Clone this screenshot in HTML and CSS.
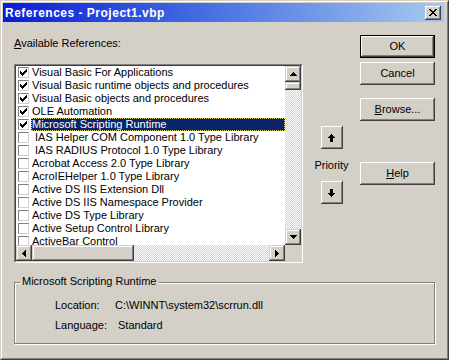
FILE: index.html
```html
<!DOCTYPE html>
<html>
<head>
<meta charset="utf-8">
<title>References - Project1.vbp</title>
<link rel="stylesheet" href="styles.css">
</head>
<body>
<div class="window">
  <div class="frame">
    <div class="titlebar">
      <span class="title">References - Project1.vbp</span>
      <span class="close"><svg width="8" height="7" viewBox="0 0 8 7" shape-rendering="crispEdges"><path d="M0 0h2v1h-2z M6 0h2v1h-2z M1 1h2v1h-2z M5 1h2v1h-2z M2 2h4v1h-4z M3 3h2v1h-2z M2 4h4v1h-4z M1 5h2v1h-2z M5 5h2v1h-2z M0 6h2v1h-2z M6 6h2v1h-2z" fill="#000"/></svg></span>
    </div>
    <div class="body">
      <div class="main">
        <div class="left">
          <div class="label"><u>A</u>vailable References:</div>
          <div class="list">
            <div class="list-in">
              <div class="items">
                <div class="row"><span class="cb"><svg class="chk" width="7" height="7" viewBox="0 0 7 7" shape-rendering="crispEdges"><path d="M6 0h1v1h-1z M5 1h2v1h-2z M0 2h1v1h-1z M4 2h3v1h-3z M0 3h2v1h-2z M3 3h3v1h-3z M0 4h5v1h-5z M1 5h3v1h-3z M2 6h1v1h-1z"/></svg></span><span class="txt">Visual Basic For Applications</span></div>
                <div class="row"><span class="cb"><svg class="chk" width="7" height="7" viewBox="0 0 7 7" shape-rendering="crispEdges"><path d="M6 0h1v1h-1z M5 1h2v1h-2z M0 2h1v1h-1z M4 2h3v1h-3z M0 3h2v1h-2z M3 3h3v1h-3z M0 4h5v1h-5z M1 5h3v1h-3z M2 6h1v1h-1z"/></svg></span><span class="txt">Visual Basic runtime objects and procedures</span></div>
                <div class="row"><span class="cb"><svg class="chk" width="7" height="7" viewBox="0 0 7 7" shape-rendering="crispEdges"><path d="M6 0h1v1h-1z M5 1h2v1h-2z M0 2h1v1h-1z M4 2h3v1h-3z M0 3h2v1h-2z M3 3h3v1h-3z M0 4h5v1h-5z M1 5h3v1h-3z M2 6h1v1h-1z"/></svg></span><span class="txt">Visual Basic objects and procedures</span></div>
                <div class="row"><span class="cb"><svg class="chk" width="7" height="7" viewBox="0 0 7 7" shape-rendering="crispEdges"><path d="M6 0h1v1h-1z M5 1h2v1h-2z M0 2h1v1h-1z M4 2h3v1h-3z M0 3h2v1h-2z M3 3h3v1h-3z M0 4h5v1h-5z M1 5h3v1h-3z M2 6h1v1h-1z"/></svg></span><span class="txt">OLE Automation</span></div>
                <div class="row sel"><span class="cb"><svg class="chk" width="7" height="7" viewBox="0 0 7 7" shape-rendering="crispEdges"><path d="M6 0h1v1h-1z M5 1h2v1h-2z M0 2h1v1h-1z M4 2h3v1h-3z M0 3h2v1h-2z M3 3h3v1h-3z M0 4h5v1h-5z M1 5h3v1h-3z M2 6h1v1h-1z"/></svg></span><span class="txt">Microsoft Scripting Runtime</span></div>
                <div class="row"><span class="cb"></span><span class="txt indent">IAS Helper COM Component 1.0 Type Library</span></div>
                <div class="row"><span class="cb"></span><span class="txt indent">IAS RADIUS Protocol 1.0 Type Library</span></div>
                <div class="row"><span class="cb"></span><span class="txt">Acrobat Access 2.0 Type Library</span></div>
                <div class="row"><span class="cb"></span><span class="txt">AcroIEHelper 1.0 Type Library</span></div>
                <div class="row"><span class="cb"></span><span class="txt">Active DS IIS Extension Dll</span></div>
                <div class="row"><span class="cb"></span><span class="txt">Active DS IIS Namespace Provider</span></div>
                <div class="row"><span class="cb"></span><span class="txt">Active DS Type Library</span></div>
                <div class="row"><span class="cb"></span><span class="txt">Active Setup Control Library</span></div>
                <div class="row"><span class="cb"></span><span class="txt">ActiveBar Control</span></div>
              </div>
              <div class="vscroll">
                <span class="sbtn"><svg width="7" height="4" viewBox="0 0 7 4" shape-rendering="crispEdges"><path d="M3 0h1v1h1v1h1v1h1v1h-7v-1h1v-1h1v-1h1z"/></svg></span>
                <span class="sthumb vthumb"></span>
                <span class="track"></span>
                <span class="sbtn"><svg width="7" height="4" viewBox="0 0 7 4" shape-rendering="crispEdges"><path d="M0 0h7v1h-1v1h-1v1h-1v1h-1v-1h-1v-1h-1v-1h-1z"/></svg></span>
              </div>
              <div class="hscroll">
                <span class="sbtn"><svg width="4" height="7" viewBox="0 0 4 7" shape-rendering="crispEdges"><path d="M3 0h1v7h-1v-1h-1v-1h-1v-1h-1v-1h1v-1h1v-1h1z"/></svg></span>
                <span class="sthumb hthumb"></span>
                <span class="track"></span>
                <span class="sbtn"><svg width="4" height="7" viewBox="0 0 4 7" shape-rendering="crispEdges"><path d="M0 0h1v1h1v1h1v1h1v1h-1v1h-1v1h-1v1h-1z"/></svg></span>
              </div>
              <div class="corner"></div>
            </div>
          </div>
        </div>
        <div class="priority">
          <span class="pbtn"><svg width="7" height="8" viewBox="0 0 7 8" shape-rendering="crispEdges"><path d="M3 0h1v1h1v1h1v1h1v1h-2v4h-3v-4h-2v-1h1v-1h1v-1h1z"/></svg></span>
          <span class="plabel">Priority</span>
          <span class="pbtn pdown"><svg width="7" height="8" viewBox="0 0 7 8" shape-rendering="crispEdges"><path d="M2 0h3v4h2v1h-1v1h-1v1h-1v1h-1v-1h-1v-1h-1v-1h-1v-1h2z"/></svg></span>
        </div>
        <div class="buttons">
          <span class="btn default">OK</span>
          <span class="btn b-cancel">Cancel</span>
          <span class="btn b-browse"><u>B</u>rowse...</span>
          <span class="btn b-help"><u>H</u>elp</span>
        </div>
      </div>
      <div class="group">
        <span class="legend">Microsoft Scripting Runtime</span>
        <div class="info-row"><span class="k">Location:</span><span class="v">C:\WINNT\system32\scrrun.dll</span></div>
        <div class="info-row"><span class="k lang">Language:</span><span class="v">Standard</span></div>
      </div>
    </div>
  </div>
</div>
</body>
</html>
```
FILE: styles.css
```css
* { box-sizing: border-box; }
html, body { margin: 0; padding: 0; }
body {
  width: 449px;
  height: 360px;
  overflow: hidden;
  background: #D4D0C8;
  font-family: "Liberation Sans", Arial, sans-serif;
  font-size: 11px;
  color: #000;
}
u { text-decoration: underline; text-underline-offset: 1px; }

.window {
  width: 449px;
  height: 360px;
  background: #D4D0C8;
  border: 1px solid;
  border-color: #D4D0C8 #404040 #404040 #D4D0C8;
}
.frame {
  height: 100%;
  border: 1px solid;
  border-color: #FFFFFF #808080 #808080 #FFFFFF;
  padding: 1px 3px 3px 1px;
  display: flex;
  flex-direction: column;
}

.titlebar {
  height: 19px;
  flex: none;
  background: linear-gradient(to right, #0A1CD8 0%, #3C64E0 40%, #A6CAF0 100%);
  display: flex;
  align-items: center;
  justify-content: space-between;
  padding-left: 2px;
}
.title {
  color: #fff;
  font-weight: bold;
  font-size: 12px;
  letter-spacing: 0.5px;
  line-height: 14px;
}
.close {
  width: 16px;
  height: 14px;
  margin-right: 3px;
  background: #D4D0C8;
  box-shadow: inset -1px -1px #404040, inset 1px 1px #FFFFFF, inset -2px -2px #808080, inset 2px 2px #D4D0C8;
  display: flex;
  align-items: center;
  justify-content: center;
  padding-right: 1px;
}

.body {
  flex: 1;
  display: flex;
  flex-direction: column;
  padding-left: 11px;
}
.main {
  display: flex;
  align-items: flex-start;
}
.left {
  width: 289px;
  padding-top: 15px;
}
.label {
  line-height: 13px;
  margin-bottom: 14px;
}
.list {
  width: 289px;
  height: 199px;
  border: 1px solid;
  border-color: #808080 #FFFFFF #FFFFFF #808080;
}
.list-in {
  height: 100%;
  border: 1px solid;
  border-color: #404040 #D4D0C8 #D4D0C8 #404040;
  background: #fff;
  display: grid;
  grid-template-columns: 1fr 16px;
  grid-template-rows: 1fr 16px;
}
.items {
  overflow: hidden;
  min-width: 0;
  min-height: 0;
}
.row {
  display: flex;
  height: 13px;
}
.cb {
  flex: none;
  width: 11px;
  height: 11px;
  margin: 1px 2px 0 2px;
  background: #fff;
  border: 1px solid;
  border-color: #808080 #D4D0C8 #D4D0C8 #808080;
  display: flex;
  align-items: center;
  justify-content: center;
}
.chk { display: block; fill: #000; }
.txt {
  flex: 1;
  min-width: 0;
  padding-left: 1px;
  line-height: 13px;
  white-space: nowrap;
  overflow: hidden;
}
.txt.indent { padding-left: 4px; }
.sel .txt {
  background: #0A246A;
  color: #fff;
  outline: 1px dotted #D8D078;
  outline-offset: -1px;
}

.vscroll {
  display: flex;
  flex-direction: column;
}
.hscroll {
  display: flex;
}
.sbtn {
  flex: none;
  width: 16px;
  height: 16px;
  background: #D4D0C8;
  box-shadow: inset -1px -1px #404040, inset 1px 1px #D4D0C8, inset -2px -2px #808080, inset 2px 2px #FFFFFF;
  display: flex;
  align-items: center;
  justify-content: center;
}
.sbtn svg { display: block; fill: #000; }
.sthumb {
  flex: none;
  background: #D4D0C8;
  box-shadow: inset -1px -1px #404040, inset 1px 1px #D4D0C8, inset -2px -2px #808080, inset 2px 2px #FFFFFF;
}
.vthumb { height: 8px; }
.hthumb { width: 102px; }
.track {
  flex: 1;
  background: repeating-conic-gradient(#FFFFFF 0 25%, #D4D0C8 0 50%) 0 0 / 2px 2px;
}
.corner { background: #D4D0C8; }

.priority {
  width: 57px;
  padding-top: 104px;
  display: flex;
  flex-direction: column;
  align-items: center;
}
.pbtn {
  width: 22px;
  height: 23px;
  background: #D4D0C8;
  box-shadow: inset -1px -1px #404040, inset 1px 1px #FFFFFF, inset -2px -2px #808080, inset 2px 2px #D4D0C8;
  display: flex;
  align-items: center;
  justify-content: center;
}
.pbtn svg { display: block; fill: #000; }
.plabel {
  line-height: 13px;
  margin-top: 10px;
  margin-bottom: 9px;
}

.buttons {
  width: 75px;
  padding-top: 13px;
  display: flex;
  flex-direction: column;
}
.btn {
  width: 75px;
  height: 23px;
  background: #D4D0C8;
  box-shadow: inset -1px -1px #404040, inset 1px 1px #FFFFFF, inset -2px -2px #808080, inset 2px 2px #D4D0C8;
  display: flex;
  align-items: center;
  justify-content: center;
  line-height: 13px;
}
.btn.default { border: 1px solid #000; }
.b-cancel { margin-top: 4px; }
.b-browse { margin-top: 13px; }
.b-help { margin-top: 41px; }

.group {
  position: relative;
  width: 421px;
  height: 62px;
  margin-top: 19px;
  border: 1px solid #808080;
  box-shadow: inset 1px 1px #FFFFFF, 1px 1px #FFFFFF;
  padding: 16px 0 0 40px;
}
.legend {
  position: absolute;
  top: -8px;
  left: 5px;
  padding: 0 2px;
  background: #D4D0C8;
  line-height: 13px;
}
.info-row {
  display: flex;
  line-height: 13px;
}
.info-row + .info-row { margin-top: 7px; }
.k { width: 60px; flex: none; }
.k.lang { width: 63px; }
```
